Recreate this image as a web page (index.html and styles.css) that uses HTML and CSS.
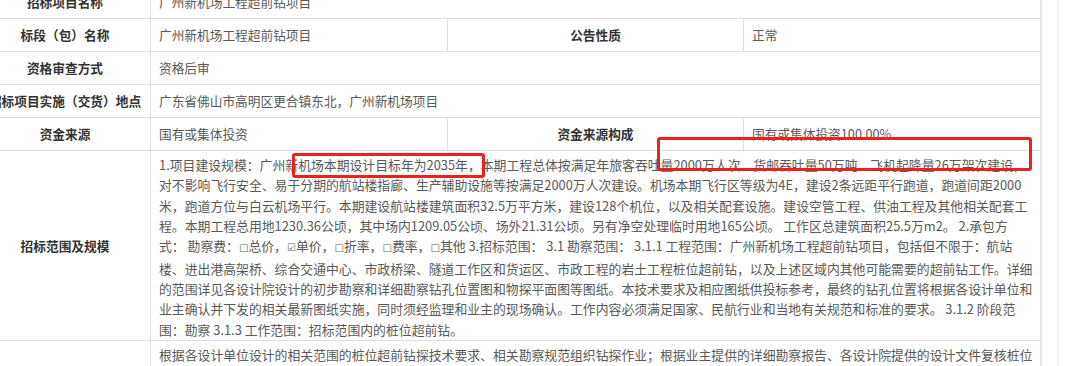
FILE: index.html
```html
<!DOCTYPE html>
<html lang="zh-CN">
<head>
<meta charset="utf-8">
<title>招标公告</title>
<link rel="stylesheet" href="styles.css">
</head>
<body>
<div class="page">
  <div class="sheet">
    <table class="info">
      <colgroup>
        <col class="c-label"><col class="c-val"><col class="c-label2"><col class="c-val2">
      </colgroup>
      <tr>
        <th>招标项目名称</th>
        <td colspan="3">广州新机场工程超前钻项目</td>
      </tr>
      <tr>
        <th>标段（包）名称</th>
        <td>广州新机场工程超前钻项目</td>
        <th>公告性质</th>
        <td>正常</td>
      </tr>
      <tr>
        <th>资格审查方式</th>
        <td colspan="3">资格后审</td>
      </tr>
      <tr>
        <th>招标项目实施（交货）地点</th>
        <td colspan="3">广东省佛山市高明区更合镇东北，广州新机场项目</td>
      </tr>
      <tr>
        <th>资金来源</th>
        <td>国有或集体投资</td>
        <th>资金来源构成</th>
        <td>国有或集体投资100.00%</td>
      </tr>
      <tr>
        <th>招标范围及规模</th>
        <td colspan="3" class="long">
          <span class="ln">1.项目建设规模：广州新机场本期设计目标年为2035年，本期工程总体按满足年旅客吞吐量2000万人次、货邮吞吐量50万吨、飞机起降量26万架次建设，</span>
          <span class="ln">对不影响飞行安全、易于分期的航站楼指廊、生产辅助设施等按满足2000万人次建设。机场本期飞行区等级为4E，建设2条远距平行跑道，跑道间距2000</span>
          <span class="ln">米，跑道方位与白云机场平行。本期建设航站楼建筑面积32.5万平方米，建设128个机位，以及相关配套设施。建设空管工程、供油工程及其他相关配套工</span>
          <span class="ln">程。本期工程总用地1230.36公顷，其中场内1209.05公顷、场外21.31公顷。另有净空处理临时用地165公顷。 工作区总建筑面积25.5万m2。 2.承包方</span>
          <span class="ln">式： 勘察费：<span class="box">□</span>总价，<span class="box">☑</span>单价，<span class="box">□</span>折率，<span class="box">□</span>费率，<span class="box">□</span>其他 3.招标范围： 3.1 勘察范围： 3.1.1 工程范围：广州新机场工程超前钻项目，包括但不限于：航站</span>
          <span class="ln">楼、进出港高架桥、综合交通中心、市政桥梁、隧道工作区和货运区、市政工程的岩土工程桩位超前钻，以及上述区域内其他可能需要的超前钻工作。详细</span>
          <span class="ln">的范围详见各设计院设计的初步勘察和详细勘察钻孔位置图和物探平面图等图纸。本技术要求及相应图纸供投标参考，最终的钻孔位置将根据各设计单位和</span>
          <span class="ln">业主确认并下发的相关最新图纸实施，同时须经监理和业主的现场确认。工作内容必须满足国家、民航行业和当地有关规范和标准的要求。 3.1.2 阶段范</span>
          <span class="ln">围：勘察 3.1.3 工作范围：招标范围内的桩位超前钻。</span>
        </td>
      </tr>
      <tr>
        <th>招标内容</th>
        <td colspan="3" class="long">
          <span class="ln">根据各设计单位设计的相关范围的桩位超前钻探技术要求、相关勘察规范组织钻探作业；根据业主提供的详细勘察报告、各设计院提供的设计文件复核桩位</span>
          <span class="ln">坐标，编制超前钻施工方案，按要求完成超前钻探工作，并及时提交钻探成果资料，配合设计单位完成桩基础设计的优化与调整工作。</span>
          <span class="ln">超前钻探成果须经监理和业主确认后方可作为桩基础施工的依据。</span>
          <span class="ln">其他未尽事宜以招标文件为准。</span>
        </td>
      </tr>
    </table>
    <div class="mark mark-a"></div>
    <div class="mark mark-b"></div>
  </div>
  <div class="rail"></div>
</div>
</body>
</html>
```

FILE: styles.css
```css
html, body {
  margin: 0;
  padding: 0;
  background: #ffffff;
  overflow: hidden;
}

.page {
  display: flex;
  align-items: flex-start;
  height: 366px;
}

.sheet {
  position: relative;
  margin-left: -21px;
  margin-top: -15px;
  width: 1061px;
  flex: none;
}

.info {
  width: 1061px;
  border-collapse: collapse;
  table-layout: fixed;
  font-family: "Noto Sans CJK SC", "Noto Sans", sans-serif;
  font-size: 12.7px;
  line-height: 20px;
  border-right: 2px solid #e6e6e6;
}

.c-label { width: 171px; }
.c-val { width: 297px; }
.c-label2 { width: 296px; }
.c-val2 { width: 297px; }

.info th,
.info td {
  border: 1px solid #dedede;
  padding: 6px 8px;
  vertical-align: middle;
}

.info th {
  color: #333333;
  font-weight: bold;
  text-align: center;
  white-space: nowrap;
}

.info td {
  color: #595959;
  text-align: left;
}

.info td.long {
  padding: 4px 8px 0;
  font-size: 12.85px;
  line-height: 20.35px;
}

.ln {
  display: block;
  white-space: nowrap;
}

.box {
  font-family: "DejaVu Sans", sans-serif;
  font-size: 10px;
  color: #666666;
}

.mark {
  position: absolute;
  border: 3px solid #e8231f;
  border-radius: 3px;
  box-sizing: border-box;
}

.mark-a {
  left: 313px;
  top: 168px;
  width: 193px;
  height: 25px;
}

.mark-b {
  left: 678px;
  top: 152px;
  width: 375px;
  height: 34px;
}

.rail {
  width: 0;
  height: 366px;
  margin-left: 17px;
  border-left: 2px solid #f1f1f1;
}
```
